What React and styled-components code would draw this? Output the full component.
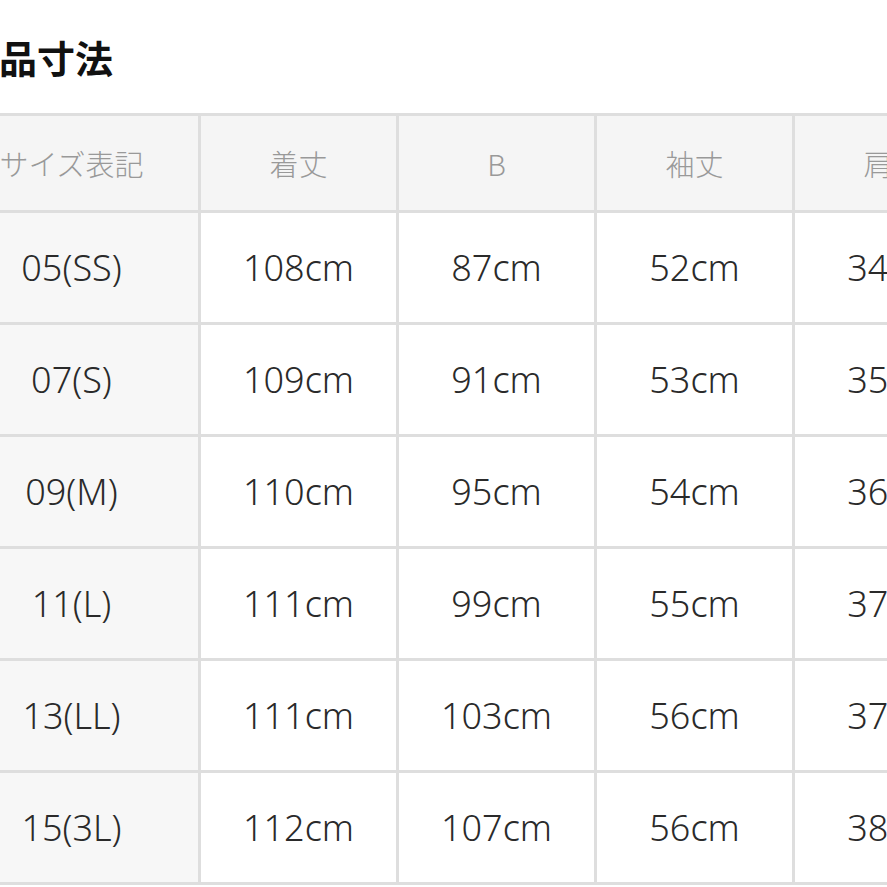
import React from "react";
import styled, { createGlobalStyle } from "styled-components";

const GlobalStyle = createGlobalStyle`
  html, body {
    margin: 0;
    padding: 0;
    background: #fff;
    overflow: hidden;
  }
  body {
    font-family: "Noto Sans", "Noto Sans CJK JP", sans-serif;
  }
`;

const headers = ["サイズ表記", "着丈", "B", "袖丈", "肩幅"];

const rows = [
  ["05(SS)", "108cm", "87cm", "52cm", "34cm"],
  ["07(S)", "109cm", "91cm", "53cm", "35cm"],
  ["09(M)", "110cm", "95cm", "54cm", "36cm"],
  ["11(L)", "111cm", "99cm", "55cm", "37cm"],
  ["13(LL)", "111cm", "103cm", "56cm", "37cm"],
  ["15(3L)", "112cm", "107cm", "56cm", "38cm"],
];

export default function App() {
  return (
    <Page>
      <GlobalStyle />
      <Title>商品寸法</Title>
      <SizeTable>
        {headers.map((h, i) => (
          <HeadCell key={h} $first={i === 0}>
            {h}
          </HeadCell>
        ))}
        {rows.map((row) =>
          row.map((val, i) => (
            <Cell key={row[0] + i} $first={i === 0}>
              {val}
            </Cell>
          ))
        )}
      </SizeTable>
    </Page>
  );
}

const Page = styled.div`
  margin-left: -58px;
  width: 1060px;
`;

const Title = styled.h1`
  margin: 0 0 0 19px;
  padding-top: 35px;
  height: 113px;
  box-sizing: border-box;
  font-family: "Noto Sans CJK JP", sans-serif;
  font-size: 38px;
  line-height: 44px;
  font-weight: 700;
  color: #111;
`;

const SizeTable = styled.div`
  display: grid;
  grid-template-columns: 253px repeat(4, 195px);
  grid-template-rows: 94px repeat(6, 109px);
  gap: 3px;
  border: 3px solid #dedede;
  background: #dedede;
  width: max-content;
`;

const HeadCell = styled.div`
  display: flex;
  align-items: center;
  justify-content: center;
  background: #f5f5f5;
  color: #999;
  font-family: "Noto Sans CJK JP", sans-serif;
  font-size: 29px;
  font-weight: 300;
  white-space: nowrap;
`;

const Cell = styled.div`
  display: flex;
  align-items: center;
  justify-content: center;
  background: ${(p) => (p.$first ? "#f7f7f7" : "#fff")};
  color: #2a2a2a;
  font-family: "Noto Sans", "Noto Sans CJK JP", sans-serif;
  font-size: 36px;
  font-weight: 300;
  white-space: nowrap;
`;
